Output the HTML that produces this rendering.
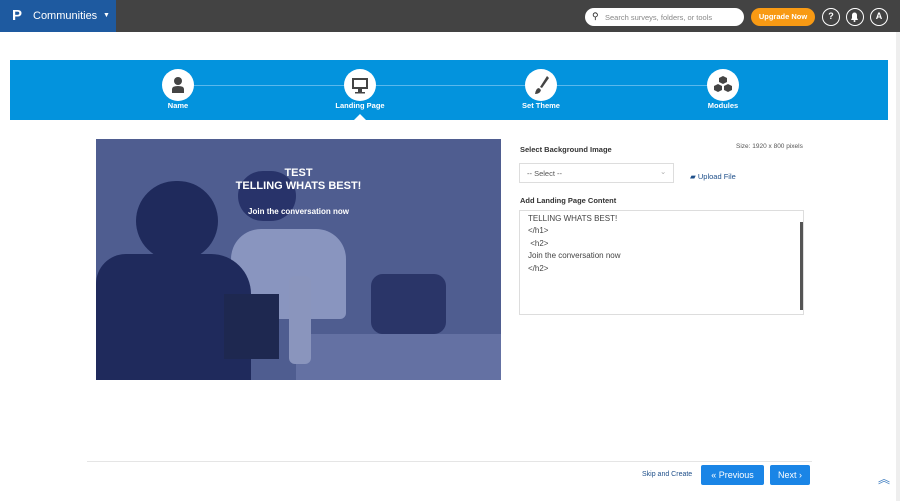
<!DOCTYPE html>
<html><head><style>
*{box-sizing:border-box;margin:0;padding:0}
body{width:900px;height:501px;background:#fff;font-family:"Liberation Sans",sans-serif;position:relative;overflow:hidden}
.top{position:absolute;left:0;top:0;width:900px;height:32px;background:#434343}
.brand{position:absolute;left:0;top:0;width:116px;height:32px;background:#1e5aa0;color:#fff;font-size:11px}
.abs{position:absolute}
.step{position:absolute;top:69px;width:32px;height:32px;border-radius:50%;background:#fff}
.lbl{position:absolute;top:101px;font-size:7.5px;font-weight:bold;color:#fff;width:100px;text-align:center}
.btn{position:absolute;background:#1a85e6;color:#fff;font-size:9px;border-radius:2px;text-align:center;line-height:20px}
</style></head><body>
<div class="top"></div>
<div class="brand"><span class="abs" style="left:12px;top:7px;font-size:15px;font-weight:bold">P</span><span class="abs" style="left:33px;top:10px">Communities</span><span class="abs" style="left:103px;top:12px;font-size:7px">▼</span></div>
<div class="abs" style="left:585px;top:8px;width:159px;height:18px;background:#fff;border-radius:9px;font-size:7.5px;color:#888;padding:5px 0 0 20px">Search surveys, folders, or tools<span class="abs" style="left:7px;top:3px;color:#222;font-size:9px">⚲</span></div>
<div class="abs" style="left:751px;top:8px;width:64px;height:18px;background:#f89a14;border-radius:9px;color:#fff;font-size:7.5px;font-weight:bold;text-align:center;line-height:18px">Upgrade Now</div>
<div class="abs" style="left:822px;top:8px;width:18px;height:18px;border:1.5px solid #fff;border-radius:50%;color:#fff;font-size:9px;font-weight:bold;text-align:center;line-height:15px">?</div>
<div class="abs" style="left:846px;top:8px;width:18px;height:18px;border:1.5px solid #fff;border-radius:50%"><svg width="15" height="15"><path d="M4 11 h7 l-1-2 v-3 a2.5 2.5 0 0 0 -5 0 v3z" fill="#fff"/><circle cx="7.5" cy="12" r="1" fill="#fff"/></svg></div>
<div class="abs" style="left:870px;top:8px;width:18px;height:18px;border:1.5px solid #fff;border-radius:50%;color:#fff;font-size:9px;font-weight:bold;text-align:center;line-height:15px">A</div>
<div class="abs" style="left:896px;top:32px;width:4px;height:469px;background:#eee"></div>

<div class="abs" style="left:10px;top:60px;width:878px;height:60px;background:#0393dd"></div>
<div class="abs" style="left:178px;top:85px;width:546px;height:1px;background:#5ab8ec"></div>
<div class="step" style="left:162px"><svg width="32" height="32"><circle cx="16" cy="12" r="4" fill="#444"/><path d="M10 24 v-4 q0-3 6-3 q6 0 6 3 v4z" fill="#444"/></svg></div>
<div class="step" style="left:344px"><svg width="32" height="32"><rect x="8" y="9" width="16" height="11" fill="#444"/><rect x="10" y="11" width="12" height="7" fill="#fff"/><rect x="14" y="20" width="4" height="3" fill="#444"/><rect x="11" y="23" width="10" height="1.5" fill="#444"/></svg></div>
<div class="step" style="left:525px"><svg width="32" height="32"><path d="M22 7 L15 18 L17 19 L24 9z" fill="#444"/><path d="M14 19 q-3 0-4 6 q5 0 6-4z" fill="#444"/></svg></div>
<div class="step" style="left:707px"><svg width="32" height="32"><g fill="#444"><path d="M16 7 l4 2 v4 l-4 2 l-4-2 v-4z"/><path d="M11 15 l4 2 v4 l-4 2 l-4-2 v-4z"/><path d="M21 15 l4 2 v4 l-4 2 l-4-2 v-4z"/></g></svg></div>
<div class="lbl" style="left:128px">Name</div>
<div class="lbl" style="left:310px">Landing Page</div>
<div class="lbl" style="left:491px">Set Theme</div>
<div class="lbl" style="left:673px">Modules</div>
<div class="abs" style="left:354px;top:114px;width:0;height:0;border-left:6px solid transparent;border-right:6px solid transparent;border-bottom:6px solid #fff"></div>

<div class="abs" style="left:96px;top:139px;width:405px;height:241px;background:#4f5d90;overflow:hidden">
<div class="abs" style="left:200px;top:195px;width:205px;height:46px;background:#6471a3"></div>
<div class="abs" style="left:135px;top:90px;width:115px;height:90px;background:#8995bf;border-radius:30px 30px 6px 6px"></div>
<div class="abs" style="left:142px;top:32px;width:58px;height:50px;background:#28336a;border-radius:28px"></div>
<div class="abs" style="left:275px;top:135px;width:75px;height:60px;background:#2a3568;border-radius:12px"></div>
<div class="abs" style="left:40px;top:42px;width:82px;height:80px;background:#1f2a5c;border-radius:40px"></div>
<div class="abs" style="left:0;top:115px;width:155px;height:126px;background:#1f2a5c;border-radius:30px 40px 0 0"></div>
<div class="abs" style="left:128px;top:155px;width:55px;height:65px;background:#1e2850"></div>
<div class="abs" style="left:193px;top:137px;width:22px;height:88px;background:#8a95bd;border-radius:6px"></div>
<div class="abs" style="left:0;top:28px;width:405px;text-align:center;color:#fff;font-weight:bold;font-size:11px;line-height:13px">TEST<br>TELLING WHATS BEST!</div>
<div class="abs" style="left:0;top:68px;width:405px;text-align:center;color:#fff;font-size:8px;font-weight:bold">Join the conversation now</div>
</div>

<div class="abs" style="left:520px;top:145px;font-size:7.5px;font-weight:bold;color:#333">Select Background Image</div>
<div class="abs" style="left:736px;top:143px;font-size:6.5px;color:#555">Size: 1920 x 800 pixels</div>
<div class="abs" style="left:519px;top:163px;width:155px;height:20px;border:1px solid #ddd;font-size:7.5px;color:#555;padding:5px 0 0 7px">-- Select --<span class="abs" style="left:140px;top:3px;color:#aaa">⌄</span></div>
<div class="abs" style="left:690px;top:172px;font-size:7.5px;color:#1e4f8a">▰ Upload File</div>
<div class="abs" style="left:520px;top:196px;font-size:7.5px;font-weight:bold;color:#333">Add Landing Page Content</div>
<div class="abs" style="left:519px;top:210px;width:285px;height:105px;border:1px solid #ddd;font-size:8px;color:#444;line-height:12.4px;padding:2px 0 0 8px;white-space:pre">TELLING WHATS BEST!
&lt;/h1&gt;
 &lt;h2&gt;
Join the conversation now
&lt;/h2&gt;</div>
<div class="abs" style="left:800px;top:222px;width:3px;height:88px;background:#555"></div>

<div class="abs" style="left:87px;top:461px;width:725px;height:1px;background:#e5e5e5"></div>
<div class="abs" style="left:642px;top:471px;font-size:7px;color:#1e4f8a">Skip and Create</div>
<div class="btn" style="left:701px;top:465px;width:63px">« Previous</div>
<div class="btn" style="left:770px;top:465px;width:40px">Next ›</div>
<div class="abs" style="left:878px;top:475px;color:#3b7bbf;font-size:12px;line-height:8px">︽</div>
</body></html>
